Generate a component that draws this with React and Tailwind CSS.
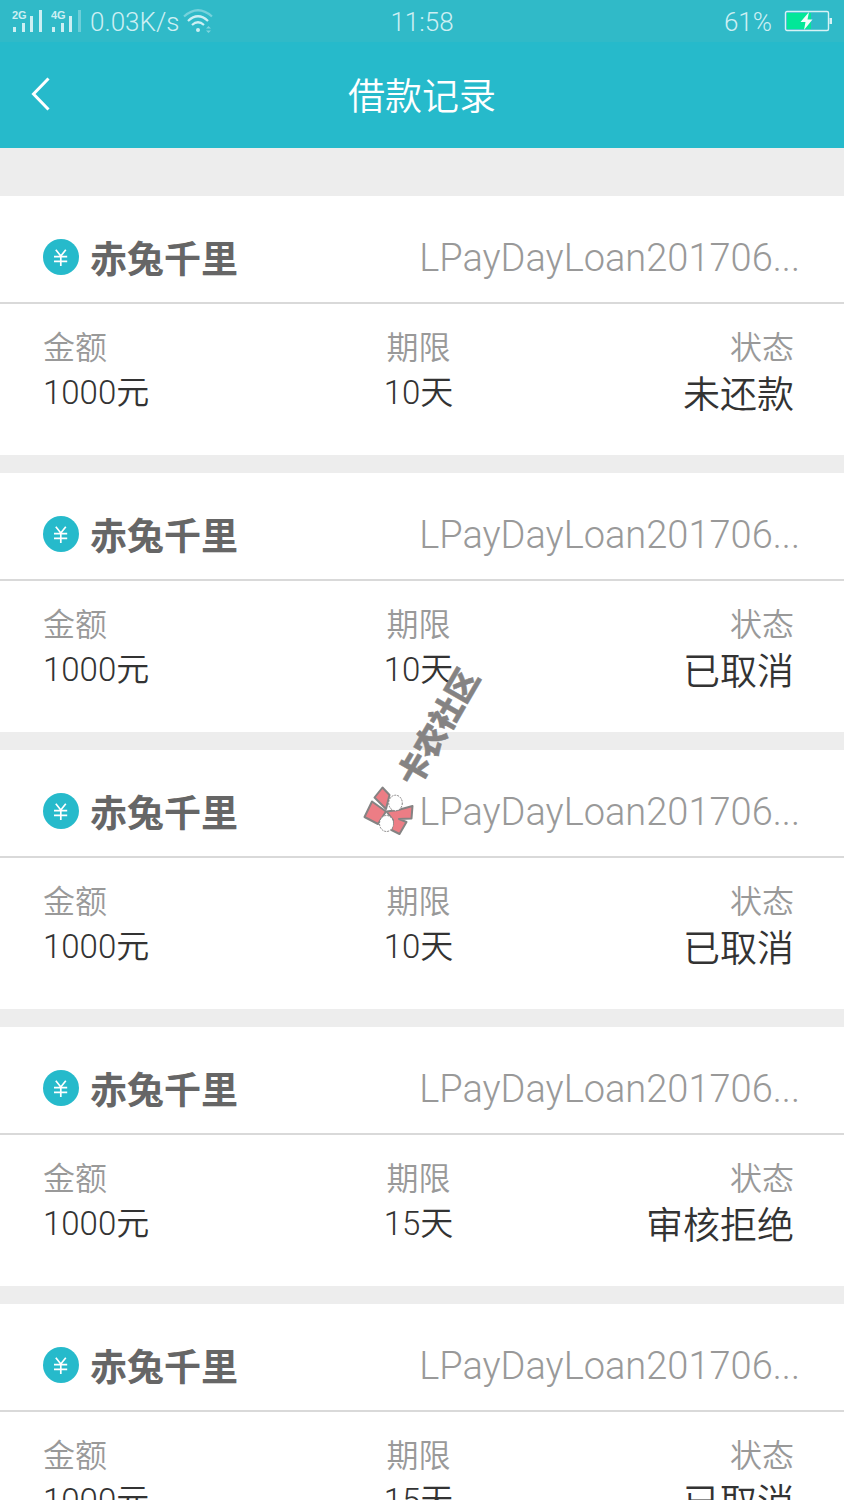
import React from 'react';

const records = [
  { id: 1, name: '赤兔千里', orderNo: 'LPayDayLoan201706...', amount: '1000元', term: '10天', status: '未还款' },
  { id: 2, name: '赤兔千里', orderNo: 'LPayDayLoan201706...', amount: '1000元', term: '10天', status: '已取消' },
  { id: 3, name: '赤兔千里', orderNo: 'LPayDayLoan201706...', amount: '1000元', term: '10天', status: '已取消' },
  { id: 4, name: '赤兔千里', orderNo: 'LPayDayLoan201706...', amount: '1000元', term: '15天', status: '审核拒绝' },
  { id: 5, name: '赤兔千里', orderNo: 'LPayDayLoan201706...', amount: '1000元', term: '15天', status: '已取消' },
];

const SignalIcon = ({ label, weak }) => (
  <svg width="32" height="26" viewBox="0 0 32 26" fill="currentColor">
    <text x="0" y="11" fontSize="11" fontWeight="700" fontFamily="Liberation Sans, Arial, sans-serif">
      {label}
    </text>
    <rect x="1" y="19" width="3" height="5" />
    <rect x="10" y="15" width="3" height="9" />
    <rect x="18" y="8" width="3" height="16" />
    <rect x="27" y="2" width="3" height="22" opacity={weak ? 0.4 : 1} />
  </svg>
);

const WifiIcon = () => (
  <svg width="30" height="26" viewBox="0 0 30 26" fill="none" stroke="currentColor" strokeWidth="2.2">
    <path d="M1 8.5 Q15 -4 29 8.5" opacity="0.45" />
    <path d="M5 13 Q15 3.5 25 13" />
    <path d="M9 17 Q15 11.5 21 17" />
    <circle cx="15" cy="22" r="2" fill="currentColor" stroke="none" />
    <path d="M23 20.5 L25.5 18 L28 20.5 Z M23 22.5 L25.5 25 L28 22.5 Z" fill="currentColor" stroke="none" opacity="0.5" />
  </svg>
);

const BatteryIcon = () => (
  <svg width="48" height="22" viewBox="0 0 48 22" fill="none">
    <rect x="1.5" y="1.5" width="43" height="19" rx="1.5" stroke="#d8f2f5" strokeWidth="1.4" />
    <rect x="3" y="3" width="24" height="16" fill="#02e798" />
    <rect x="45.5" y="8" width="2.5" height="6" fill="#d8f2f5" />
    <path d="M25 2 L16.5 12 H21.5 L20 20 L28.5 9.5 H23.5 Z" fill="#f1fdfb" />
  </svg>
);

const StatusBar = () => (
  <div className="h-[42px] grid grid-cols-3 items-center px-3 bg-[#30bac8] text-[#cdeff3] text-[26px] leading-8 font-light font-[Roboto,sans-serif]">
    <div className="flex items-center whitespace-nowrap">
      <div className="flex gap-[7px] mr-[7px]">
        <SignalIcon label="2G" />
        <SignalIcon label="4G" weak />
      </div>
      <span className="pt-0.5 mr-1">0.03K/s</span>
      <WifiIcon />
    </div>
    <span className="pt-0.5 text-center">11:58</span>
    <div className="flex items-center justify-end gap-3">
      <span className="pt-0.5">61%</span>
      <BatteryIcon />
    </div>
  </div>
);

const NavBar = () => (
  <header className="h-[106px] grid grid-cols-[84px_1fr_84px] items-center pb-0.5 bg-[#26bacb] text-white">
    <button type="button" aria-label="返回" className="h-full flex items-center pl-[30px]">
      <svg width="20" height="34" viewBox="0 0 20 34" fill="none" stroke="currentColor" strokeWidth="3">
        <path d="M18.5 1.5 L3.5 17 L18.5 32.5" />
      </svg>
    </button>
    <h1 className="text-center text-[37px] leading-[56px] font-[350]">借款记录</h1>
  </header>
);

const YenBadge = () => (
  <svg className="shrink-0" width="36" height="36" viewBox="0 0 36 36" fill="none">
    <circle cx="18" cy="18" r="18" fill="#26bacb" />
    <path
      d="M12.8 10.8 L17.8 17 L22.8 10.8 M17.8 17 V27 M11 17.6 H24.2 M11 22.4 H24.2"
      stroke="#fff"
      strokeWidth="1.7"
    />
  </svg>
);

const Field = ({ label, children, className, valueClass }) => (
  <div className={className}>
    <dt className="text-[32px] leading-[44px] text-[#999999]">{label}</dt>
    <dd className={valueClass}>{children}</dd>
  </div>
);

const RecordCard = ({ record }) => (
  <li className="bg-white">
    <div className="h-[108px] flex items-center justify-between gap-4 pt-4 pl-[43px] pr-[44px] border-b-2 border-[#d9d9d9]">
      <div className="flex items-center gap-[11px]">
        <YenBadge />
        <h2 className="text-[37px] leading-[56px] font-bold text-[#666666]">{record.name}</h2>
      </div>
      <span className="pt-0.5 text-[38px] leading-[56px] font-light text-[#999999] font-[Roboto,sans-serif] truncate">
        {record.orderNo}
      </span>
    </div>
    <dl className="grid grid-cols-3 pt-[19px] pb-9 pl-[43px] pr-[50px] font-[350] text-[#333333]">
      <Field label="金额" valueClass="text-[33px] leading-[52px] font-[Roboto,'Noto_Sans_CJK_SC',sans-serif]">
        {record.amount}
      </Field>
      <Field
        label="期限"
        className="text-center"
        valueClass="text-[33px] leading-[52px] font-[Roboto,'Noto_Sans_CJK_SC',sans-serif]"
      >
        {record.term}
      </Field>
      <Field label="状态" className="text-right" valueClass="text-[37px] leading-[50px]">
        {record.status}
      </Field>
    </dl>
  </li>
);

const Watermark = () => (
  <svg
    className="absolute left-1/2 top-1/2 -translate-x-1/2 -translate-y-1/2 pointer-events-none"
    width="120"
    height="172"
    viewBox="0 0 120 172"
    overflow="visible"
  >
    <text
      transform="translate(76 63) rotate(-60)"
      textAnchor="middle"
      y="12"
      fontSize="32"
      fontWeight="900"
      fill="#858383"
      stroke="#858383"
      strokeWidth="0.5"
    >
      卡农社区
    </text>
    <g stroke="#858383" strokeWidth="2" strokeLinejoin="round">
      <path d="M20.5 123.5 L27.5 131 L24 145 L12.5 133.5 Z" fill="#ec7d85" />
      <path d="M10 137.5 L24 147.5 L16 160 L2.5 153 Z" fill="#ec7d85" />
      <path d="M24.5 147.5 L36 146 L50.5 142 L49.5 154.5 L37 155 L44.5 158 L37.5 170 L29.5 166 L31 156 Z" fill="#ec7d85" />
      <ellipse cx="33.5" cy="139" rx="6.8" ry="7.8" fill="#fff" strokeWidth="1" strokeDasharray="2 1" />
      <ellipse cx="24.5" cy="159.5" rx="7" ry="8" fill="#fff" strokeWidth="1" strokeDasharray="2 1" />
    </g>
  </svg>
);

export default function App() {
  return (
    <div
      lang="zh-CN"
      className="relative h-screen flex flex-col overflow-hidden bg-[#ededed] font-['Noto_Sans_CJK_SC',sans-serif]"
    >
      <StatusBar />
      <NavBar />
      <main className="flex-1 min-h-0 overflow-y-auto [scrollbar-width:none] pt-12">
        <ul className="space-y-[18px]">
          {records.map((record) => (
            <RecordCard key={record.id} record={record} />
          ))}
        </ul>
      </main>
      <Watermark />
    </div>
  );
}
